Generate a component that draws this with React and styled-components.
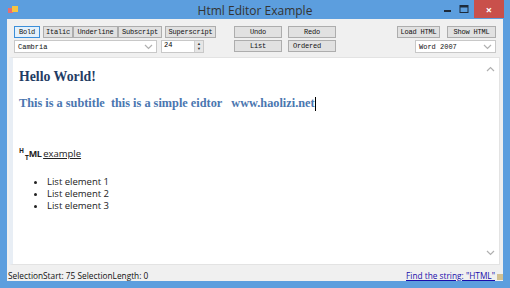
import React from 'react';
import styled, { createGlobalStyle } from 'styled-components';

const GlobalStyle = createGlobalStyle`
  html, body {
    margin: 0;
    padding: 0;
    width: 510px;
    height: 288px;
    overflow: hidden;
    background: #5c9ede;
  }
`;

const Window = styled.div`
  width: 510px;
  height: 288px;
  box-sizing: border-box;
  background: #5c9ede;
  display: flex;
  flex-direction: column;
  padding-bottom: 7px;
  font-family: 'Open Sans', 'Liberation Sans', sans-serif;
`;

const TitleBar = styled.div`
  height: 19px;
  flex: none;
  display: flex;
  align-items: center;
  padding: 0 6px 0 8px;
`;

const AppIcon = styled.div`
  width: 10px;
  height: 9px;
  position: relative;
  margin-top: 2px;
  &::before {
    content: '';
    position: absolute;
    left: 0;
    top: 2px;
    width: 5px;
    height: 5px;
    background: #e86f6f;
  }
  &::after {
    content: '';
    position: absolute;
    left: 4px;
    top: 0;
    width: 6px;
    height: 6px;
    background: #f5c542;
  }
`;

const Title = styled.div`
  flex: 1;
  text-align: center;
  font-size: 12px;
  color: #333;
  padding-left: 50px;
  margin-top: 1px;
`;

const Controls = styled.div`
  display: flex;
  align-items: flex-start;
  height: 19px;
  gap: 2px;
`;

const CtrlBtn = styled.div`
  width: ${(p) => p.$w}px;
  height: 18px;
  display: flex;
  align-items: center;
  justify-content: center;
  background: ${(p) => (p.$close ? '#c9504b' : 'transparent')};
  color: white;
  font-size: 11px;
  font-weight: bold;
`;

const Client = styled.div`
  flex: 1;
  min-height: 0;
  margin: 0 7px;
  background: #f0f0f0;
  display: flex;
  flex-direction: column;
`;

const Toolbar = styled.div`
  display: flex;
  flex: none;
  padding: 7px 7px 0 7px;
  height: 27px;
`;

const Group = styled.div`
  display: flex;
  flex-direction: column;
  gap: 2px;
  margin-left: ${(p) => p.$ml || 0}px;
`;

const Row = styled.div`
  display: flex;
  gap: ${(p) => p.$gap || 0}px;
  align-items: center;
`;

const Btn = styled.div`
  width: ${(p) => p.$w}px;
  height: 12px;
  box-sizing: border-box;
  border: 1px solid ${(p) => (p.$active ? '#3c8fd9' : '#adadad')};
  background: ${(p) => (p.$active ? '#e5f1fb' : '#e1e1e1')};
  font-family: 'Liberation Mono', monospace;
  font-size: 7px;
  color: #111;
  display: flex;
  align-items: center;
  justify-content: ${(p) => (p.$left ? 'flex-start' : 'center')};
  padding-left: ${(p) => (p.$left ? 4 : 0)}px;
  letter-spacing: -0.2px;
`;

const Combo = styled.div`
  width: ${(p) => p.$w}px;
  height: 13px;
  box-sizing: border-box;
  border: 1px solid #c8c8c8;
  background: #fff;
  font-family: 'Liberation Mono', monospace;
  font-size: 7px;
  color: #111;
  display: flex;
  align-items: center;
  padding: 0 3px;
  justify-content: space-between;
`;

const Spin = styled.div`
  width: 43px;
  height: 13px;
  box-sizing: border-box;
  border: 1px solid #c8c8c8;
  background: #fff;
  font-family: 'Liberation Mono', monospace;
  font-size: 7px;
  display: flex;
  align-items: flex-start;
  justify-content: space-between;
  padding-left: 2px;
`;

const SpinArrows = styled.div`
  width: 8px;
  height: 11px;
  background: #e6e6e6;
  border-left: 1px solid #d0d0d0;
  display: flex;
  flex-direction: column;
  align-items: center;
  justify-content: space-around;
  font-size: 4px;
  line-height: 4px;
  color: #333;
`;

const Spacer = styled.div`
  flex: 1;
`;

const EditorBox = styled.div`
  margin: 4px 3px 0 2px;
  height: 208px;
  flex: none;
  box-sizing: border-box;
  border: 1px solid #e3e3e3;
  border-left: 4px solid #e8eef5;
  background: #fff;
  display: flex;
`;

const Content = styled.div`
  flex: 1;
  padding: 10px 0 0 6px;
  color: #111;
`;

const H1 = styled.div`
  font-family: 'Liberation Serif', 'DejaVu Serif', serif;
  font-weight: bold;
  font-size: 13.8px;
  color: #1f3c64;
  line-height: 18px;
`;

const Subtitle = styled.div`
  font-family: 'Liberation Serif', 'DejaVu Serif', serif;
  font-weight: bold;
  font-size: 12.3px;
  color: #4a76b0;
  margin-top: 10px;
  white-space: pre;
  display: flex;
  align-items: center;
`;

const Caret = styled.span`
  display: inline-block;
  width: 1px;
  height: 14px;
  background: #000;
`;

const HtmlLine = styled.div`
  margin-top: 36px;
  font-family: 'Open Sans', 'Liberation Sans', sans-serif;
  font-size: 9.5px;
  display: flex;
  align-items: baseline;
  color: #222;
`;

const Sup = styled.span`
  font-weight: bold;
  font-size: 6.5px;
  position: relative;
  top: -4px;
`;

const Sub = styled.span`
  font-weight: bold;
  font-size: 6.5px;
  position: relative;
  top: 3px;
  margin-left: 1px;
`;

const Bold = styled.span`
  font-weight: bold;
  font-size: 9px;
  letter-spacing: -0.6px;
  margin-right: 2px;
`;

const Under = styled.span`
  text-decoration: underline;
`;

const List = styled.ul`
  margin: 16px 0 0 0;
  padding-left: 28px;
  font-family: 'Open Sans', 'Liberation Sans', sans-serif;
  font-size: 9.5px;
  line-height: 12px;
  color: #222;
  li::marker {
    font-size: 9px;
  }
`;

const Scroll = styled.div`
  width: 17px;
  display: flex;
  flex-direction: column;
  justify-content: space-between;
  align-items: center;
  padding: 8px 0 8px;
`;

const StatusBar = styled.div`
  flex: 1;
  display: flex;
  align-items: center;
  justify-content: space-between;
  padding: 4px 0 0 1px;
  font-family: 'Open Sans', 'Liberation Sans', sans-serif;
  font-size: 8.3px;
  color: #111;
`;

const StatusRight = styled.div`
  position: relative;
  padding-right: 8px;
  display: flex;
  align-items: center;
  align-self: stretch;
`;

const StatusLink = styled.span`
  color: #1a0dab;
  text-decoration: underline;
`;

const Grip = styled.div`
  position: absolute;
  right: 0;
  bottom: 1px;
  width: 6px;
  height: 6px;
  background: radial-gradient(circle, #c8b070 0.6px, transparent 1px) 0 0 / 2px 2px;
`;

const Chevron = ({ up }) => (
  <svg width="9" height="6" viewBox="0 0 9 6">
    <path
      d={up ? 'M1 5 L4.5 1.5 L8 5' : 'M1 1 L4.5 4.5 L8 1'}
      fill="none"
      stroke="#b0b0b0"
      strokeWidth="1.2"
    />
  </svg>
);

export default function App() {
  return (
    <>
      <GlobalStyle />
      <Window>
        <TitleBar>
          <AppIcon />
          <Title>Html Editor Example</Title>
          <Controls>
            <CtrlBtn $w={12}>
              <svg width="8" height="8" viewBox="0 0 8 8">
                <rect x="0" y="5" width="7" height="2" fill="#1d2a3a" />
              </svg>
            </CtrlBtn>
            <CtrlBtn $w={16}>
              <svg width="10" height="8" viewBox="0 0 10 8">
                <rect x="1" y="0.5" width="8" height="7" fill="none" stroke="#1d2a3a" strokeWidth="1" />
                <rect x="1" y="0.5" width="8" height="2" fill="#1d2a3a" />
              </svg>
            </CtrlBtn>
            <CtrlBtn $w={30} $close>×</CtrlBtn>
          </Controls>
        </TitleBar>
        <Client>
          <Toolbar>
            <Group>
              <Row $gap={3}>
                <Btn $w={26} $active>Bold</Btn>
                <Row>
                  <Btn $w={30}>Italic</Btn>
                  <Btn $w={45}>Underline</Btn>
                  <Btn $w={44}>Subscript</Btn>
                </Row>
                <Btn $w={51}>Superscript</Btn>
              </Row>
              <Row $gap={4}>
                <Combo $w={143}>
                  <span>Cambria</span>
                  <Chevron />
                </Combo>
                <Spin>
                  <span>24</span>
                  <SpinArrows>
                    <span>▲</span>
                    <span>▼</span>
                  </SpinArrows>
                </Spin>
              </Row>
            </Group>
            <Group $ml={18}>
              <Row $gap={6}>
                <Btn $w={48}>Undo</Btn>
                <Btn $w={48}>Redo</Btn>
              </Row>
              <Row $gap={6}>
                <Btn $w={48}>List</Btn>
                <Btn $w={48} $left>Ordered</Btn>
              </Row>
            </Group>
            <Spacer />
            <Group>
              <Row $gap={7}>
                <Btn $w={43}>Load HTML</Btn>
                <Btn $w={49}>Show HTML</Btn>
              </Row>
              <Row>
                <Spacer />
                <Combo $w={81}>
                  <span>Word 2007</span>
                  <Chevron />
                </Combo>
              </Row>
            </Group>
          </Toolbar>
          <EditorBox>
            <Content>
              <H1>Hello World!</H1>
              <Subtitle>
                This is a subtitle  this is a simple eidtor   www.haolizi.net
                <Caret />
              </Subtitle>
              <HtmlLine>
                <Sup>H</Sup>
                <Sub>T</Sub>
                <Bold>ML</Bold>
                <Under>example</Under>
              </HtmlLine>
              <List>
                <li>List element 1</li>
                <li>List element 2</li>
                <li>List element 3</li>
              </List>
            </Content>
            <Scroll>
              <Chevron up />
              <Chevron />
            </Scroll>
          </EditorBox>
          <StatusBar>
            <span>SelectionStart: 75 SelectionLength: 0</span>
            <StatusRight>
              <StatusLink>Find the string: "HTML"</StatusLink>
              <Grip />
            </StatusRight>
          </StatusBar>
        </Client>
      </Window>
    </>
  );
}
